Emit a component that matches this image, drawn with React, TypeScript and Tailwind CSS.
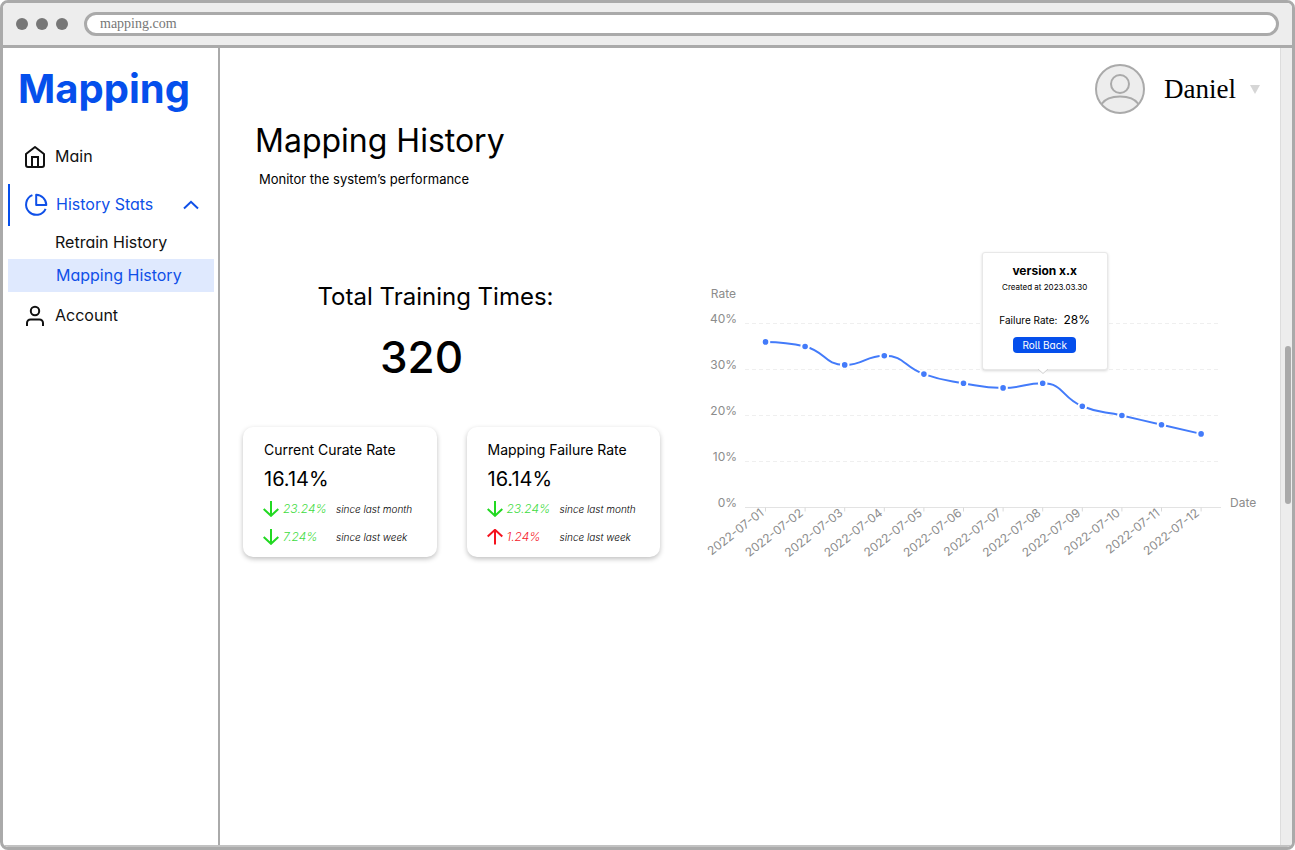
import React from "react";

const POINTS = [
  { date: "2022-07-01", rate: 36 },
  { date: "2022-07-02", rate: 35 },
  { date: "2022-07-03", rate: 31 },
  { date: "2022-07-04", rate: 33 },
  { date: "2022-07-05", rate: 29 },
  { date: "2022-07-06", rate: 27 },
  { date: "2022-07-07", rate: 26 },
  { date: "2022-07-08", rate: 27 },
  { date: "2022-07-09", rate: 22 },
  { date: "2022-07-10", rate: 20 },
  { date: "2022-07-11", rate: 18 },
  { date: "2022-07-12", rate: 16 },
];

const CHART = { width: 556, height: 280, left: 41, right: 517, base: 223.5, perPercent: 4.6, firstX: 61.5, stepX: 39.6 };
const SELECTED = 7;

type Pt = { x: number; y: number };

const xAt = (i: number) => CHART.firstX + i * CHART.stepX;
const yAt = (rate: number) => CHART.base - rate * CHART.perPercent;
const between = (v: number, a: number, b: number) => Math.min(Math.max(v, Math.min(a, b)), Math.max(a, b));

// Smooth curve whose control points never overshoot the neighbouring values.
function smoothPath(pts: Pt[], smooth = 0.5): string {
  let d = `M${pts[0].x} ${pts[0].y}`;
  let out = pts[0];
  for (let i = 1; i < pts.length; i++) {
    const p = pts[i];
    const prev = pts[i - 1];
    const next = pts[i + 1];
    let cpIn = p;
    let cpOut = p;
    if (next) {
      const lenPrev = Math.hypot(p.x - prev.x, p.y - prev.y);
      const lenNext = Math.hypot(next.x - p.x, next.y - p.y);
      const ratio = lenNext / (lenNext + lenPrev);
      const vx = next.x - prev.x;
      const vy = next.y - prev.y;
      const outX = between(p.x + vx * smooth * ratio, next.x, p.x);
      let outY = between(p.y + vy * smooth * ratio, next.y, p.y);
      const inX = between(p.x - ((outX - p.x) * lenPrev) / lenNext, prev.x, p.x);
      const inY = between(p.y - ((outY - p.y) * lenPrev) / lenNext, prev.y, p.y);
      outY = p.y + ((p.y - inY) * lenNext) / lenPrev;
      cpIn = { x: inX, y: inY };
      cpOut = { x: outX, y: outY };
    }
    d += ` C${out.x} ${out.y} ${cpIn.x} ${cpIn.y} ${p.x} ${p.y}`;
    out = cpOut;
  }
  return d;
}

function HomeIcon() {
  return (
    <svg viewBox="0 0 24 24" className="size-6" fill="none" stroke="currentColor" strokeWidth="2" strokeLinejoin="round">
      <path d="M3 9 12 2l9 7v11a2 2 0 0 1-2 2H5a2 2 0 0 1-2-2z" />
      <path d="M9 22V12h6v10" strokeLinejoin="miter" />
    </svg>
  );
}

function PieIcon() {
  return (
    <svg viewBox="0 0 24 24" className="size-6" fill="none" stroke="currentColor" strokeWidth="2" strokeLinejoin="round">
      <path d="M8.4 2.2A10.2 10.2 0 1 0 21.6 15.8" />
      <path d="M12.2 1.8A10.3 10.3 0 0 1 22.3 12H12.2z" />
    </svg>
  );
}

function PersonIcon() {
  return (
    <svg viewBox="0 0 24 24" className="size-6" fill="none" stroke="currentColor" strokeWidth="2">
      <circle cx="12" cy="7" r="4.2" />
      <path d="M4 22V19a3.5 3.5 0 0 1 3.5-3.5h9A3.5 3.5 0 0 1 20 19v3" />
    </svg>
  );
}

function Arrow({ up }: { up: boolean }) {
  return (
    <svg viewBox="0 0 16 16" className={up ? "size-4 text-[#f5121d]" : "size-4 text-[#22d922]"} fill="none" stroke="currentColor" strokeWidth="2">
      {up ? <path d="M8 15.500V.8M.7 7.500 8 .8l7.300 6.700" /> : <path d="M8 0v14.6M.7 8 8 14.8 15.3 8" />}
    </svg>
  );
}

type Change = { up: boolean; value: string; label: string };

function RateCard({ title, value, changes }: { title: string; value: string; changes: Change[] }) {
  return (
    <section className="flex-1 rounded-[10px] bg-white pt-[11px] pb-1.5 pl-5 shadow-[0_2px_5px_rgba(0,0,0,0.25)]">
      <h3 className="pl-px text-sm leading-6">{title}</h3>
      <p className="pt-0.5 pl-px text-xl leading-[31px]">{value}</p>
      <ul>
        {changes.map((c) => (
          <li key={c.label} className="grid h-7 grid-cols-[16px_49px_1fr] items-center gap-x-1 font-light italic">
            <Arrow up={c.up} />
            <span className={c.up ? "text-xs text-[#f5222c]" : "text-xs text-[#3fdc3f]"}>{c.value}</span>
            <span className="text-[10px]">{c.label}</span>
          </li>
        ))}
      </ul>
    </section>
  );
}

function RateChart() {
  const pts = POINTS.map((p, i) => ({ x: xAt(i), y: yAt(p.rate) }));
  const anchor = pts[SELECTED];
  return (
    <div className="relative min-w-0 flex-1">
      <svg viewBox={`0 0 ${CHART.width} ${CHART.height}`} className="block w-full" role="img" aria-label="Failure rate by date">
        <g className="fill-[#8c8c8c] text-xs">
          <text x="32" y="14" textAnchor="end">Rate</text>
          <text x="526" y="223">Date</text>
          {[40, 30, 20, 10, 0].map((r) => (
            <text key={r} x="33" y={yAt(r) - 0.5} textAnchor="end">{r}%</text>
          ))}
        </g>
        {[40, 30, 20, 10].map((r) => (
          <line key={r} x1={CHART.left} x2={CHART.right} y1={yAt(r)} y2={yAt(r)} stroke="#efefef" strokeDasharray="4 3" />
        ))}
        <line x1={CHART.left} x2={CHART.right} y1={CHART.base} y2={CHART.base} stroke="#e3e3e3" />
        {POINTS.map((p, i) => (
          <g key={p.date}>
            <line x1={xAt(i)} x2={xAt(i)} y1={CHART.base} y2={CHART.base + 4} stroke="#d9d9d9" />
            <text
              textAnchor="end"
              transform={`translate(${xAt(i) - 1} ${CHART.base + 7}) rotate(-38)`}
              className="fill-[#8c8c8c] text-xs"
            >
              {p.date}
            </text>
          </g>
        ))}
        <path d={smoothPath(pts)} fill="none" stroke="#437bfa" strokeWidth="2" />
        {pts.map((p) => (
          <circle key={p.x} cx={p.x} cy={p.y} r="3.8" fill="#437bfa" stroke="#fff" strokeWidth="2" />
        ))}
      </svg>
      <div
        className="absolute -translate-x-1/2 -translate-y-full pb-[13px]"
        style={{ left: `${((anchor.x + 2) / CHART.width) * 100}%`, top: `${(anchor.y / CHART.height) * 100}%` }}
      >
        <div className="relative flex h-[118px] w-[126px] flex-col items-center rounded-[3px] border border-[#e8e8e8] bg-white shadow-[0_1px_3px_rgba(0,0,0,0.16)]">
          <h3 className="mt-2 text-xs leading-5 font-bold">version x.x</h3>
          <p className="text-[8px] leading-3">Created at 2023.03.30</p>
          <p className="mt-[17px] flex items-baseline gap-1.5 text-[10px] leading-5">
            Failure Rate: <span className="text-xs">28%</span>
          </p>
          <button type="button" className="mt-[7px] h-4 w-[63px] rounded-[4px] bg-[#054fec] text-[10px] leading-4 text-white [font-feature-settings:'cv05','cv11']">
            Roll Back
          </button>
          <svg viewBox="0 0 10 5" className="absolute top-full left-[55px] h-[5px] w-[10px]">
            <path d="M0 0 5 4.5 10 0" fill="#fff" stroke="#d0d0d0" />
          </svg>
        </div>
      </div>
    </div>
  );
}

export default function App() {
  return (
    <div className="flex min-h-screen flex-col overflow-hidden rounded-lg border-3 border-[#aaa] bg-white font-['Inter',sans-serif] text-black">
      <header className="flex h-[45px] items-center gap-4 border-b-3 border-[#aaa] bg-[#ededed] pr-[13px] pl-[13px]">
        <div className="flex gap-2">
          <span className="size-3 rounded-full bg-[#777]" />
          <span className="size-3 rounded-full bg-[#777]" />
          <span className="size-3 rounded-full bg-[#777]" />
        </div>
        <input
          aria-label="Address"
          defaultValue="mapping.com"
          className="h-6 min-w-0 flex-1 rounded-full border-3 border-[#aaa] bg-white px-[13px] font-['Liberation_Serif',serif] text-sm text-[#777] outline-none"
        />
      </header>

      <div className="flex flex-1 border-b-2 border-[#c2c2c2]">
        <aside className="w-[217px] shrink-0 border-r-2 border-r-[#aaa] pr-1 pl-[5px]">
          <p className="h-[88px] pl-[10px] text-[40px] leading-[82px] font-bold text-[#054fec]">Mapping</p>
          <nav className="text-base text-[#111] [font-feature-settings:'cv05','cv11']">
            <a href="#main" className="flex h-[42px] items-center gap-2 pl-[15px]">
              <HomeIcon />
              <span className="pb-0.5">Main</span>
            </a>
            <button type="button" aria-expanded="true" className="mt-1.5 flex h-[42px] w-full items-center gap-2 border-l-2 border-[#054fec] pl-[14px] text-[#0f50e8]">
              <PieIcon />
              <span className="pb-0.5">History Stats</span>
              <svg viewBox="0 0 16 10" className="mr-[15px] ml-auto h-[10px] w-4" fill="none" stroke="currentColor" strokeWidth="2">
                <path d="M1 8.5 8 1.8l7 6.7" />
              </svg>
            </button>
            <a href="#retrain" className="flex h-[33px] items-center pb-0.5 pl-[47px]">Retrain History</a>
            <a href="#mapping" aria-current="page" className="flex h-[33px] items-center bg-[#dfe9fe] pb-0.5 pl-12 text-[#0f50e8]">Mapping History</a>
            <a href="#account" className="mt-[3px] flex h-[42px] items-center gap-2 pl-[15px]">
              <PersonIcon />
              <span className="pb-0.5">Account</span>
            </a>
          </nav>
        </aside>

        <main className="min-w-0 flex-1 pt-4 pr-5 pl-[23px]">
          <div className="flex justify-end">
            <button type="button" className="flex items-center gap-[19px] font-['Liberation_Serif',serif] text-[27px]">
              <svg viewBox="0 0 50 50" className="size-[50px]" fill="#ededed" stroke="#aaa" strokeWidth="2">
                <circle cx="25" cy="25" r="24" />
                <circle cx="25" cy="20" r="9" />
                <path d="M6.5 40C10 35 17 32.500 25 32.500S40 35 43.500 40" />
              </svg>
              <span>Daniel</span>
              <svg viewBox="0 0 10 9" className="-ml-[5px] h-[9px] w-[10px]" fill="#d6d6d6">
                <path d="M0 0h10L5 9z" />
              </svg>
            </button>
          </div>
          <div className="pl-3">
            <h1 className="mt-1 text-[32px] leading-[46px]">Mapping History</h1>
            <p className="mt-[5px] pl-1 text-[13px] leading-5">Monitor the system’s performance</p>
          </div>

          <div className="mt-[95px] flex items-start gap-[44px]">
            <div className="w-[417px] shrink-0">
              <h2 className="pr-8 text-center text-2xl leading-[26px]">Total Training Times:</h2>
              <p className="pt-5 pr-15 text-center text-[44px] leading-[54px] font-medium">320</p>
              <div className="mt-[43px] flex gap-[30px]">
                <RateCard
                  title="Current Curate Rate"
                  value="16.14%"
                  changes={[
                    { up: false, value: "23.24%", label: "since last month" },
                    { up: false, value: "7.24%", label: "since last week" },
                  ]}
                />
                <RateCard
                  title="Mapping Failure Rate"
                  value="16.14%"
                  changes={[
                    { up: false, value: "23.24%", label: "since last month" },
                    { up: true, value: "1.24%", label: "since last week" },
                  ]}
                />
              </div>
            </div>
            <RateChart />
          </div>
        </main>

        <div className="flex w-3 shrink-0 justify-end border-l border-[#ddd] bg-[#ededed] pt-[298px] pr-px">
          <div className="h-[158px] w-1.5 rounded-full bg-[#aaa]" />
        </div>
      </div>
    </div>
  );
}
